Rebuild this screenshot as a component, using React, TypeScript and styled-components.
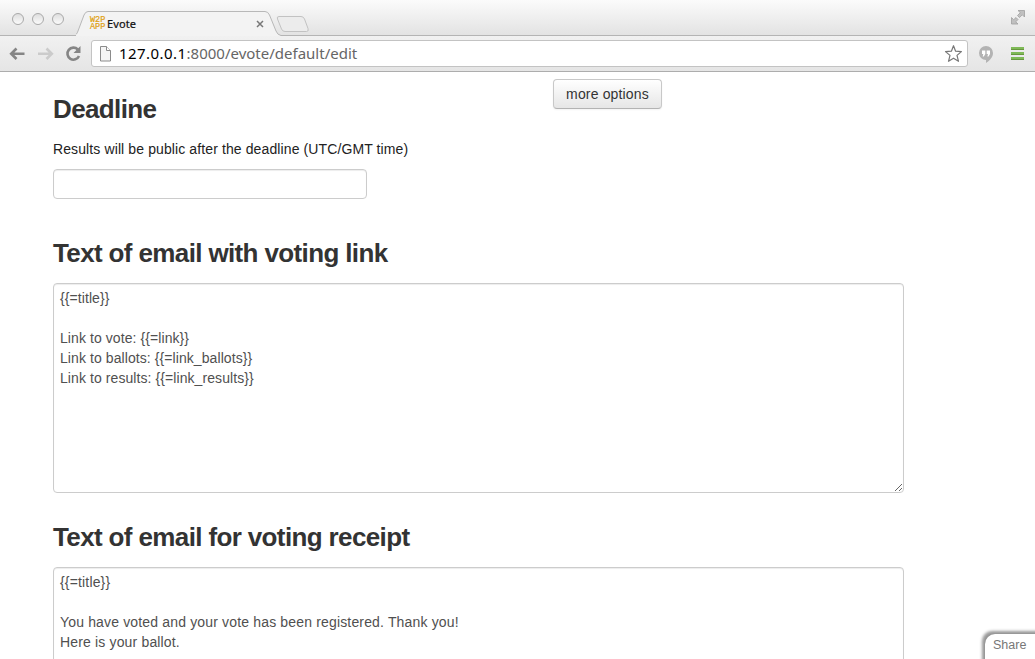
import React from "react";
import styled, { createGlobalStyle } from "styled-components";

const GlobalStyle = createGlobalStyle`
  html, body { margin: 0; padding: 0; background: #fff; overflow: hidden; }
  * { box-sizing: border-box; }
`;

const Window = styled.div`
  position: relative;
  width: 1035px;
  height: 659px;
  overflow: hidden;
  display: flex;
  flex-direction: column;
  background: #fff;
  color: #333;
  font: 14px/20px "Liberation Sans", Arial, sans-serif;
`;

const TabStrip = styled.header`
  flex: none;
  height: 36px;
  display: flex;
  background: linear-gradient(#fbfbfb, #e2e2e2);
  box-shadow: inset 0 -1px #b4b4b4;
`;

const Lights = styled.div`
  display: flex;
  gap: 8px;
  padding: 13px 0 0 12px;
  width: 76px;
`;

const Light = styled.span`
  width: 12px;
  height: 12px;
  border-radius: 50%;
  border: 1px solid #a9a9a9;
  background: linear-gradient(#dedede, #fbfbfb);
`;

const Tab = styled.div`
  position: relative;
  width: 205px;
  height: 36px;
  display: flex;
  align-items: center;
  padding: 12px 0 0 14px;
`;

const TabShape = styled.svg`
  position: absolute;
  left: 0;
  top: 0;
`;

const Favicon = styled.span`
  position: relative;
  width: 16px;
  height: 16px;
  padding-top: 1px;
  color: #e0a010;
  font: 8.5px/7px "Liberation Mono", monospace;
  -webkit-text-stroke: 0.2px #e0a010;
`;

const TabTitle = styled.span`
  position: relative;
  margin-left: 1px;
  width: 149px;
  color: #111;
  font: 11px/16px "Noto Sans", sans-serif;
  letter-spacing: 0.1px;
  -webkit-text-stroke: 0.2px #111;
`;

const TabClose = styled.svg`
  position: relative;
`;

const NewTab = styled.svg`
  margin: 15px 0 0 -6px;
`;

const Expand = styled.svg`
  margin: 9px 9px 0 auto;
`;

const Toolbar = styled.nav`
  flex: none;
  height: 36px;
  display: flex;
  align-items: center;
  padding: 0 10px 0 9px;
  background: linear-gradient(#f1f1f1, #e5e5e5);
  border-bottom: 1px solid #adadad;
`;

const NavIcon = styled.svg<{ $gap: number }>`
  flex: none;
  margin-right: ${(p) => p.$gap}px;
`;

const AddressBar = styled.div`
  width: 877px;
  height: 27px;
  display: flex;
  align-items: center;
  padding: 0 5px 0 8px;
  background: #fff;
  border: 1px solid #c3c3c3;
  border-radius: 3px;
`;

const Url = styled.span`
  flex: 1;
  margin-left: 8px;
  padding-bottom: 2px;
  color: #666;
  font: 15px/20px "Noto Sans", sans-serif;
  white-space: nowrap;
  b { font-weight: 400; color: #000; letter-spacing: 0.45px; }
`;

const Page = styled.main`
  flex: 1;
  min-height: 0;
  padding: 7px 131px 0 53px;
`;

const Columns = styled.div`
  display: grid;
  grid-template-columns: 500px auto;
  justify-content: start;
  align-items: start;
`;

const DeadlineGroup = styled.section`
  padding-top: 10px;
`;

const Section = styled.section<{ $top: number }>`
  margin-top: ${(p) => p.$top}px;
`;

const Heading = styled.h3`
  margin: 0 0 10px;
  font-size: 26px;
  line-height: 40px;
  font-weight: 700;
  letter-spacing: -0.63px;
  white-space: nowrap;
`;

const Help = styled.p`
  margin: 0 0 10px;
  color: #222;
  letter-spacing: 0.11px;
`;

const Field = styled.input`
  display: block;
  width: 314px;
  height: 30px;
  border: 1px solid #ccc;
  border-radius: 4px;
  box-shadow: inset 0 1px 1px rgba(0, 0, 0, 0.075);
`;

const TextBox = styled.textarea<{ $tracking: number }>`
  display: block;
  width: 851px;
  height: 210px;
  padding: 4px 6px;
  border: 1px solid #ccc;
  border-radius: 4px;
  box-shadow: inset 0 1px 1px rgba(0, 0, 0, 0.075);
  color: #505050;
  font: inherit;
  letter-spacing: ${(p) => p.$tracking}px;
  overflow: hidden;
  resize: both;
`;

const Button = styled.button`
  width: 109px;
  height: 30px;
  padding: 0;
  border: 1px solid #c8c8c8;
  border-bottom-color: #b3b3b3;
  border-radius: 4px;
  background: linear-gradient(#fff, #e6e6e6);
  box-shadow: 0 1px 2px rgba(0, 0, 0, 0.05);
  color: #333;
  font: inherit;
  letter-spacing: 0.16px;
`;

const Share = styled.div`
  position: absolute;
  left: 985px;
  top: 634px;
  width: 60px;
  height: 40px;
  padding: 1px 0 0 8px;
  border-top-left-radius: 10px;
  background: #fff;
  box-shadow: 0 0 1px #777, -3px -3px 3px #999;
  color: #777;
  font-size: 12.5px;
`;

const mailText = `{{=title}}

Link to vote: {{=link}}
Link to ballots: {{=link_ballots}}
Link to results: {{=link_results}}`;

const receiptText = `{{=title}}

You have voted and your vote has been registered. Thank you!
Here is your ballot.`;

export default function App() {
  return (
    <Window>
      <GlobalStyle />
      <TabStrip>
        <Lights>
          <Light />
          <Light />
          <Light />
        </Lights>
        <Tab>
          <TabShape width="205" height="36" viewBox="0 0 205 36">
            <path
              d="M-3 36V35.5C0 35 1 34 2 31L8 15Q9.500 11.500 12 11.500H189Q192 11.500 193.500 15L200 31Q201.500 35 205 35.500V36Z"
              fill="#f3f3f3"
            />
            <path
              d="M-3 35.500C0 35 1 34 2 31L8 15Q9.500 11.500 12 11.500H189Q192 11.500 193.500 15L200 31Q201.500 35 205 35.500"
              fill="none"
              stroke="#b8b8b8"
            />
          </TabShape>
          <Favicon>W2P APP</Favicon>
          <TabTitle>Evote</TabTitle>
          <TabClose width="8" height="8" viewBox="0 0 8 8">
            <path d="M1 1L7 7M7 1L1 7" stroke="#777" strokeWidth="1.500" />
          </TabClose>
        </Tab>
        <NewTab width="36" height="18" viewBox="0 0 36 18">
          <path
            d="M4 1.500H26Q28.500 1.500 29.500 4L33 13.500Q34 16.500 31.500 16.500H10Q7.500 16.500 6.500 14L2.500 4Q1.500 1.500 4 1.500Z"
            fill="#ececec"
            stroke="#c2c2c2"
          />
        </NewTab>
        <Expand width="17" height="17" viewBox="0 0 17 17">
          <path
            d="M9 1.500H15.500V8L13.300 5.800L10.500 8.600L8.500 6.500L11.300 3.700ZM2.500 8.500L4.700 10.700L7 8.500L9 10.500L6.700 12.800L9 15H2.500Z"
            fill="#c0c0c0"
            stroke="#a0a0a0"
            strokeWidth=".8"
          />
        </Expand>
      </TabStrip>
      <Toolbar>
        <NavIcon $gap={12} width="17" height="16" viewBox="0 0 17 16">
          <path d="M15.500 7.800H3M7.500 2.500L2.200 7.800L7.500 13" fill="none" stroke="#858585" strokeWidth="2.600" />
        </NavIcon>
        <NavIcon $gap={10} width="17" height="16" viewBox="0 0 17 16">
          <path d="M0 7.800H13M8.500 2.500L13.800 7.800L8.500 13" fill="none" stroke="#cbcbcb" strokeWidth="2.600" />
        </NavIcon>
        <NavIcon $gap={9} width="17" height="18" viewBox="0 0 17 18">
          <path d="M12.800 4.500A6 6 0 1 0 14 11" fill="none" stroke="#858585" strokeWidth="2.600" />
          <path d="M15.500 1V8H8.500Z" fill="#858585" />
        </NavIcon>
        <AddressBar>
          <svg width="11" height="16" viewBox="0 0 11 16">
            <path d="M.5 .5H6.500L10.500 4.500V15H.5Z" fill="#f5f5f5" stroke="#8b8b8b" />
            <path d="M6.500 .5V4.500H10.500" fill="#fff" stroke="#8b8b8b" />
          </svg>
          <Url>
            <b>127.0.0.1</b>:8000/evote/default/edit
          </Url>
          <svg width="18" height="18" viewBox="0 0 18 18">
            <path
              d="M9.500 .7L11.600 6.200L17.400 6.600L13 10.400L14.500 16.300L9.500 13.200L4.500 16.300L6 10.400L1.500 6.600L7.400 6.200Z"
              fill="#fff"
              stroke="#777"
              strokeWidth="1.200"
              strokeLinejoin="round"
            />
          </svg>
        </AddressBar>
        <svg width="37" height="20" viewBox="0 0 37 20">
          <path
            d="M18 2A7 7 0 1 0 18 16V19C22 16.500 25 13 25 9A7 7 0 0 0 18 2Z"
            fill="#b3b3b3"
          />
          <path d="M14 6.500H17.300V10L15.800 12.500H14.700L15.300 10H14ZM18.700 6.500H22V10L20.500 12.500H19.400L20 10H18.700Z" fill="#fff" />
        </svg>
        <svg width="20" height="17" viewBox="0 0 20 17">
          <path d="M6 3.500H19M6 8.500H19M6 13.500H19" stroke="#7fba57" strokeWidth="3" />
          <path d="M6 4.500H19M6 9.500H19M6 14.500H19" stroke="#67973f" strokeWidth="1" />
        </svg>
      </Toolbar>
      <Page>
        <Columns>
          <DeadlineGroup>
            <Heading>Deadline</Heading>
            <Help>Results will be public after the deadline (UTC/GMT time)</Help>
            <Field aria-label="Deadline" />
          </DeadlineGroup>
          <Button>more options</Button>
        </Columns>
        <Section $top={34}>
          <Heading>Text of email with voting link</Heading>
          <TextBox $tracking={0.08} defaultValue={mailText} spellCheck={false} />
        </Section>
        <Section $top={24}>
          <Heading>Text of email for voting receipt</Heading>
          <TextBox $tracking={0.16} defaultValue={receiptText} spellCheck={false} />
        </Section>
      </Page>
      <Share>Share</Share>
    </Window>
  );
}
